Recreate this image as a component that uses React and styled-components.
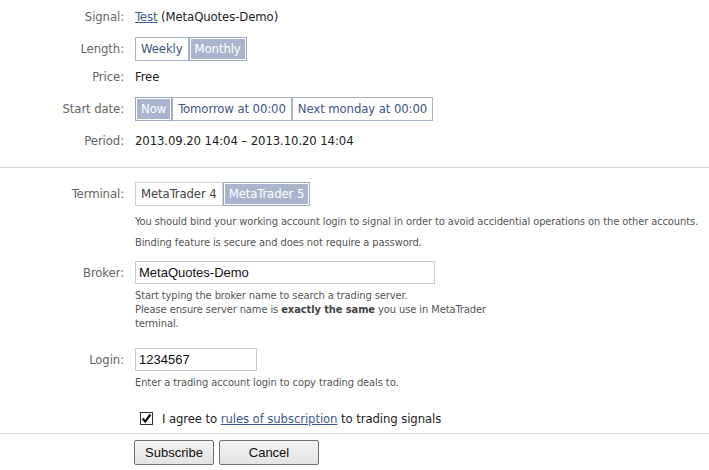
import React from "react";
import styled, { createGlobalStyle } from "styled-components";

const Global = createGlobalStyle`
  html, body { margin: 0; padding: 0; background: #fff; }
  body {
    font-family: "DejaVu Sans Condensed", "DejaVu Sans", sans-serif;
    font-stretch: semi-condensed;
    font-size: 13px;
    letter-spacing: -0.1px;
    color: #222;
  }
`;

const Page = styled.div`
  width: 709px;
  display: flex;
  flex-direction: column;
`;

const Row = styled.div`
  display: flex;
  align-items: flex-start;
  margin-top: ${(p) => p.$mt || 0}px;
`;

const Label = styled.div`
  width: 124px;
  flex: none;
  text-align: right;
  color: #666;
  line-height: ${(p) => p.$lh || 16}px;
`;

const Body = styled.div`
  margin-left: 11px;
  display: flex;
  flex-direction: column;
  align-items: flex-start;
`;

const Text = styled.div`
  line-height: 16px;
  color: #222;
  white-space: nowrap;
`;

const Link = styled.a`
  color: #3d5a92;
  text-decoration: underline;
  cursor: pointer;
`;

const Group = styled.div`
  display: flex;
`;

const Toggle = styled.button`
  font: inherit;
  letter-spacing: inherit;
  height: 24px;
  padding: 0 5px;
  margin: 0;
  cursor: pointer;
  line-height: 22px;
  border: 1px solid ${(p) => (p.$active ? "#9ba9c4" : p.$grey ? "#cfcfcf" : "#a9b5cc")};
  background: ${(p) => (p.$active ? "#a8b5cd" : "#fff")};
  box-shadow: ${(p) => (p.$active ? "inset 0 0 0 1px #fff" : "none")};
  color: ${(p) => (p.$active ? "#fff" : p.$grey ? "#444" : "#3e5689")};
  & + & { margin-left: ${(p) => (p.$overlap ? -1 : 0)}px; }
`;

const Divider = styled.hr`
  border: 0;
  height: 1px;
  background: #d9d9d9;
  margin: ${(p) => p.$mt || 0}px 0 0;
  width: 100%;
`;

const Help = styled.div`
  font-size: 11px;
  letter-spacing: -0.09px;
  line-height: 14px;
  color: #555;
  margin-top: ${(p) => p.$mt || 0}px;
  white-space: nowrap;
  b { color: #444; }
`;

const Input = styled.input`
  box-sizing: border-box;
  width: ${(p) => p.$w}px;
  height: 23px;
  border: 1px solid #c9c9c9;
  padding: 0 3px;
  margin: 0;
  font-family: "Liberation Sans", Arial, sans-serif;
  font-stretch: normal;
  letter-spacing: 0;
  font-size: 13px;
  color: #111;
  outline: none;
`;

const CheckRow = styled.label`
  display: flex;
  align-items: center;
  margin-left: 140px;
  margin-top: 20px;
  height: 16px;
  gap: 9px;
  color: #222;
  white-space: nowrap;
`;

const Box = styled.span`
  box-sizing: border-box;
  width: 13px;
  height: 13px;
  border: 1px solid #333;
  background: #fff;
  display: flex;
  align-items: center;
  justify-content: center;
`;

const Footer = styled.div`
  display: flex;
  gap: 5px;
  padding-left: 134px;
  margin-top: 6px;
`;

const Btn = styled.button`
  box-sizing: border-box;
  width: ${(p) => p.$w}px;
  height: 25px;
  margin: 0;
  padding: 0;
  border: 1px solid #707070;
  border-radius: 2px;
  background: linear-gradient(#f2f2f2, #e3e3e3);
  font-family: "Liberation Sans", Arial, sans-serif;
  font-stretch: normal;
  letter-spacing: 0;
  font-size: 13px;
  color: #111;
  cursor: pointer;
`;

export default function App() {
  return (
    <Page>
      <Global />
      <Row $mt={9}>
        <Label>Signal:</Label>
        <Body>
          <Text>
            <Link>Test</Link> (MetaQuotes-Demo)
          </Text>
        </Body>
      </Row>
      <Row $mt={12}>
        <Label $lh={24}>Length:</Label>
        <Body>
          <Group>
            <Toggle>Weekly</Toggle>
            <Toggle $active>Monthly</Toggle>
          </Group>
        </Body>
      </Row>
      <Row $mt={8}>
        <Label>Price:</Label>
        <Body>
          <Text>Free</Text>
        </Body>
      </Row>
      <Row $mt={12}>
        <Label $lh={24}>Start date:</Label>
        <Body>
          <Group>
            <Toggle $active $overlap>Now</Toggle>
            <Toggle $overlap>Tomorrow at 00:00</Toggle>
            <Toggle $overlap>Next monday at 00:00</Toggle>
          </Group>
        </Body>
      </Row>
      <Row $mt={12}>
        <Label>Period:</Label>
        <Body>
          <Text>2013.09.20 14:04 – 2013.10.20 14:04</Text>
        </Body>
      </Row>

      <Divider $mt={18} />

      <Row $mt={14}>
        <Label $lh={24}>Terminal:</Label>
        <Body>
          <Group>
            <Toggle $grey>MetaTrader 4</Toggle>
            <Toggle $active>MetaTrader 5</Toggle>
          </Group>
          <Help $mt={9}>
            You should bind your working account login to signal in order to avoid accidential operations on the other accounts.
          </Help>
          <Help $mt={7}>Binding feature is secure and does not require a password.</Help>
        </Body>
      </Row>
      <Row $mt={11}>
        <Label $lh={23}>Broker:</Label>
        <Body>
          <Input $w={300} defaultValue="MetaQuotes-Demo" />
          <Help $mt={5}>
            Start typing the broker name to search a trading server.
            <br />
            Please ensure server name is <b>exactly the same</b> you use in MetaTrader
            <br />
            terminal.
          </Help>
        </Body>
      </Row>
      <Row $mt={17}>
        <Label $lh={23}>Login:</Label>
        <Body>
          <Input $w={122} defaultValue="1234567" />
          <Help $mt={5}>Enter a trading account login to copy trading deals to.</Help>
        </Body>
      </Row>

      <CheckRow>
        <Box>
          <svg width="11" height="11" viewBox="0 0 11 11">
            <path d="M1.5 5.5 L4.2 8.5 L9.5 1.5" fill="none" stroke="#111" strokeWidth="2.2" />
          </svg>
        </Box>
        <span>
          I agree to <Link>rules of subscription</Link> to trading signals
        </span>
      </CheckRow>

      <Divider $mt={7} />

      <Footer>
        <Btn $w={80}>Subscribe</Btn>
        <Btn $w={100}>Cancel</Btn>
      </Footer>
    </Page>
  );
}
